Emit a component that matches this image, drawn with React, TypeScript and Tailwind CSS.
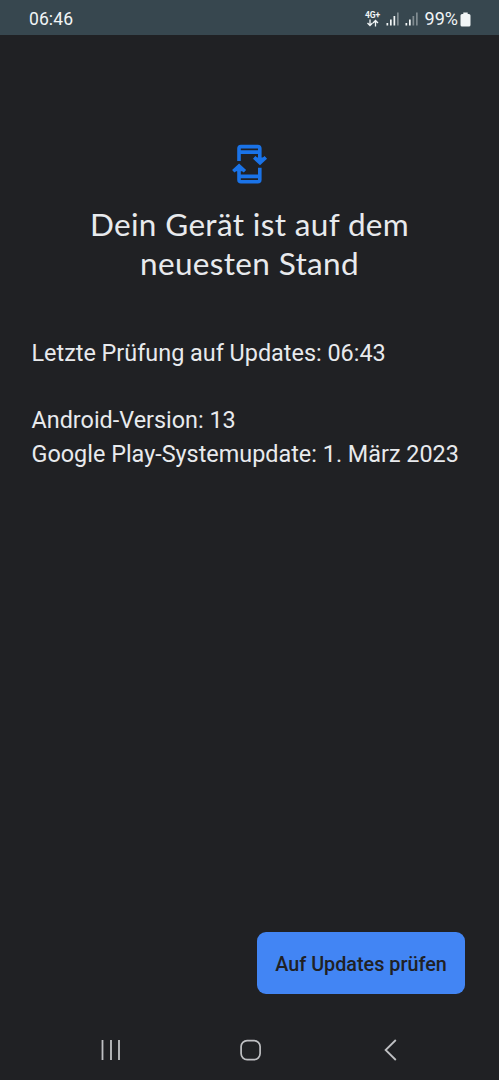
function StatusBar() {
  return (
    <header className="flex h-[34.5px] shrink-0 items-center justify-between bg-[#37474f] pl-[29px] pr-[28px] pt-[4px] text-[#f1f5f6]">
      <span className="text-[17.5px] leading-5 tracking-[0.1px]">06:46</span>
      <div className="flex items-center">
        <div className="flex w-4 flex-col items-center">
          <span className="text-[8.5px] font-bold leading-[8px]">4G+</span>
          <svg width="13" height="8" viewBox="0 0 13 8" fill="none" stroke="currentColor" strokeWidth="1.3">
            <path d="M4 0.5v6M1.5 4L4 6.5L6.5 4M9.5 7.5v-6M7 4L9.5 1.5L12 4" />
          </svg>
        </div>
        <Signal className="ml-[5px]" level={3} />
        <Signal className="ml-[5px]" level={2} />
        <span className="ml-1.5 text-[18px] leading-5">99%</span>
        <svg className="ml-[2px]" width="11" height="15" viewBox="0 0 11 15" fill="currentColor">
          <path d="M3.3 0.5h4.4v1.4h1.2a1.6 1.6 0 0 1 1.6 1.6v9.4a1.6 1.6 0 0 1-1.6 1.6H2.1a1.6 1.6 0 0 1-1.6-1.6V3.5a1.6 1.6 0 0 1 1.6-1.6h1.2z" />
        </svg>
      </div>
    </header>
  );
}

function Signal({ level, className }: { level: number; className: string }) {
  return (
    <svg className={className} width="14" height="14" viewBox="0 0 14 14" fill="currentColor">
      <rect x="0.5" y="11" width="1.7" height="2.5" />
      <rect x="4" y="7.5" width="1.7" height="6" />
      <rect x="7.5" y="4" width="1.7" height="9.5" opacity={level > 2 ? 1 : 0.4} />
      <rect x="11" y="0.5" width="1.7" height="13" opacity="0.4" />
    </svg>
  );
}

function UpdateIcon() {
  return (
    <svg width="60" height="60" viewBox="0 0 60 60" fill="none" stroke="#1a73e8" strokeWidth="3.6">
      <path d="M19 26V13.6a2 2 0 0 1 2-2h16.8a2 2 0 0 1 2 2v13.6M19 17.1h21" />
      <path d="M34.2 22.4l5.8 5.4 5.8-5.4" fill="#1a73e8" />
      <path d="M39.8 32.7v12a2 2 0 0 1-2 2H21a2 2 0 0 1-2-2V31.5M19 41.4h21" />
      <path d="M13.3 36.3l5.8-5.4 5.8 5.4" fill="#1a73e8" />
    </svg>
  );
}

function NavigationBar() {
  return (
    <nav className="flex h-[60px] shrink-0 items-center justify-between px-[99px] text-[#bfc0c3]">
      <svg width="24" height="24" viewBox="0 0 24 24" fill="none" stroke="currentColor" strokeWidth="1.8">
        <path d="M3.5 2v20M12 2v20M20 2v20" />
      </svg>
      <svg width="24" height="24" viewBox="0 0 24 24" fill="none" stroke="currentColor" strokeWidth="1.7">
        <rect x="3.1" y="2.6" width="19" height="19" rx="6" />
      </svg>
      <svg width="24" height="24" viewBox="0 0 24 24" fill="none" stroke="currentColor" strokeWidth="1.8">
        <path d="M19.8 2L9.6 12l10.2 10" />
      </svg>
    </nav>
  );
}

export default function App() {
  return (
    <div className="flex h-screen flex-col bg-[#202124] font-['Roboto',sans-serif] text-[#e8eaed]">
      <StatusBar />
      <main className="flex flex-1 flex-col">
        <div className="flex flex-col items-center pt-[100.5px]">
          <UpdateIcon />
          <h1 className="mt-[10px] text-center font-['Lato',sans-serif] text-[31.5px] leading-[39px] tracking-[0.35px]">
            Dein Gerät ist auf dem
            <br />
            neuesten Stand
          </h1>
        </div>
        <div className="mt-[53px] whitespace-nowrap pl-[31.5px] text-[23.4px] leading-[34px]">
          <p>Letzte Prüfung auf Updates: 06:43</p>
          <p className="mt-[33px]">Android-Version: 13</p>
          <p>Google Play-Systemupdate: 1. März 2023</p>
        </div>
        <button className="mb-[26px] mr-[34px] mt-auto h-[62px] w-[208px] self-end whitespace-nowrap rounded-[9px] bg-[#4285f4] pt-[3px] text-[19.8px] font-medium text-[#202124]">
          Auf Updates prüfen
        </button>
      </main>
      <NavigationBar />
    </div>
  );
}
